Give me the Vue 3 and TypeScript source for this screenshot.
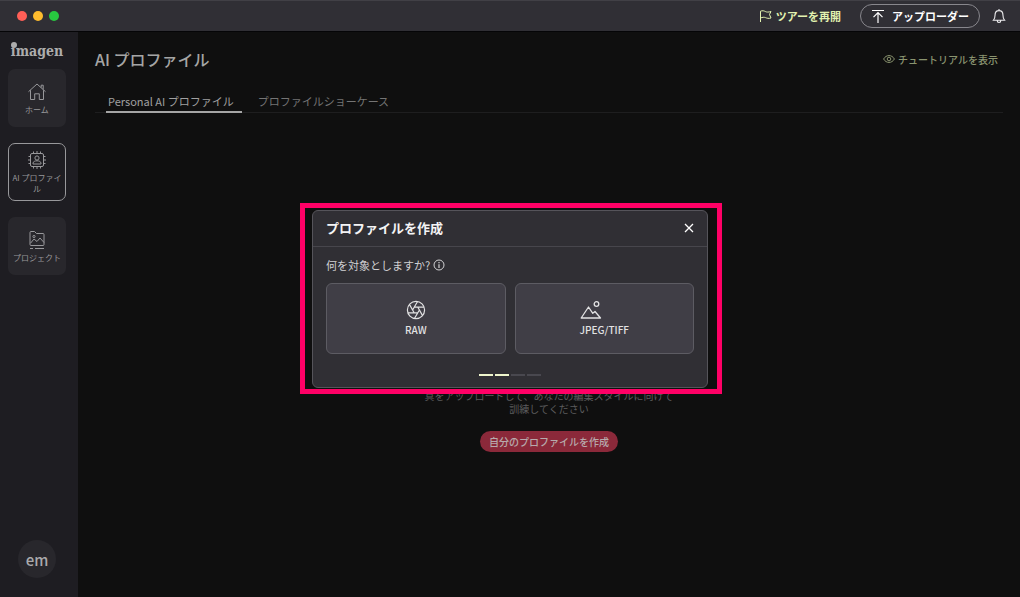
<script setup lang="ts">
import { ref } from 'vue'

interface NavItem {
  id: string
  label: string
}

const navItems: NavItem[] = [
  { id: 'home', label: 'ホーム' },
  { id: 'profile', label: 'AI プロファイル' },
  { id: 'project', label: 'プロジェクト' },
]
const activeNav = ref('profile')

const tabs: string[] = ['Personal AI プロファイル', 'プロファイルショーケース']
const activeTab = ref(0)

const steps = 4
const currentStep = ref(2)
</script>

<template>
  <div class="app">
    <header class="topbar">
      <div class="lights">
        <span class="light red"></span>
        <span class="light yellow"></span>
        <span class="light green"></span>
      </div>
      <button class="tour" type="button">
        <svg width="13" height="12" viewBox="0 0 13 12" fill="none" stroke="currentColor">
          <path d="M1.5 12V1.2C3.5.4 5 .8 6.300 1.500S9.500 2.300 12 1.500L10.500 4.500 12 8C9.500 8.800 8 8.200 6.500 7.600S3.500 7.200 1.500 8" />
        </svg>
        ツアーを再開
      </button>
      <button class="uploader" type="button">
        <svg width="14" height="14" viewBox="0 0 14 14" fill="none" stroke="currentColor" stroke-width="1.200">
          <path d="M1 1.500H13M7 14V4M2.500 8.200 7 3.700l4.500 4.500" />
        </svg>
        アップローダー
      </button>
      <button class="bell" type="button" aria-label="通知">
        <svg width="14" height="16" viewBox="0 0 14 16" fill="none" stroke="currentColor" stroke-width="1.100">
          <path d="M7 1v1.500M1.500 12.200C2.800 10.800 3 9.500 3 7.500 3 4.500 4.500 2.600 7 2.600s4 1.900 4 4.900c0 2 .2 3.300 1.500 4.700ZM5.200 12.500c0 2.600 3.600 2.600 3.600 0" />
        </svg>
      </button>
    </header>

    <div class="body">
      <nav class="sidebar">
        <div class="logo">imagen</div>
        <button
          v-for="item in navItems"
          :key="item.id"
          class="nav-item"
          :class="{ active: item.id === activeNav }"
          type="button"
          @click="activeNav = item.id"
        >
          <svg v-if="item.id === 'home'" width="20" height="20" viewBox="0 0 20 20" fill="none" stroke="currentColor">
            <path d="M1.500 9.700 10 2l8.500 7.700M3.500 8.200v9.300h4.200v-5.700h4.600v5.700h4.200V8.200M14.200 5.500V3.200h2v4.300" />
          </svg>
          <svg v-else-if="item.id === 'profile'" width="20" height="20" viewBox="0 0 20 20" fill="none" stroke="currentColor">
            <rect x="3.500" y="3.500" width="13" height="13" rx="1.500" />
            <circle cx="10" cy="8" r="2.100" />
            <path d="M6 14v-.8c0-3.200 8-3.200 8 0v.8ZM6.500 1.500v2M10 1v2.500M13.500 1.500v2M6.500 16.500v2M10 16.500V19M13.500 16.500v2M1.500 6.500h2M1 10h2.500M1.500 13.500h2M16.500 6.500h2M16.500 10H19M16.500 13.500h2" />
          </svg>
          <svg v-else width="20" height="20" viewBox="0 0 20 20" fill="none" stroke="currentColor">
            <path d="M3 14.500V2.500q0-1 1-1h3.500l2 2H16q1 0 1 1v10q0 1-1 1H4q-1 0-1-1ZM3.500 13.200 7 9l3 2.500L13 8l4 4.500M3 18.500h3M8 18.500h9" />
            <circle cx="7" cy="6.500" r="1.100" />
          </svg>
          <span>{{ item.label }}</span>
        </button>
        <button class="avatar" type="button">em</button>
      </nav>

      <main class="main">
        <div class="title-row">
          <h1>AI プロファイル</h1>
          <a class="tutorial" href="#">
            <svg width="12" height="10" viewBox="0 0 12 10" fill="none" stroke="currentColor">
              <path d="M.6 5C3.200.4 8.800.4 11.400 5 8.800 9.600 3.200 9.600.6 5Z" />
              <circle cx="6" cy="5" r="1.800" />
            </svg>
            チュートリアルを表示
          </a>
        </div>
        <div class="tabs" role="tablist">
          <button
            v-for="(tab, i) in tabs"
            :key="tab"
            class="tab"
            :class="{ active: i === activeTab }"
            type="button"
            role="tab"
            :aria-selected="i === activeTab"
            @click="activeTab = i"
          >
            {{ tab }}
          </button>
        </div>
        <section class="empty">
          <p>真をアップロードして、あなたの編集スタイルに向けて<br />訓練してください</p>
          <button class="create" type="button">自分のプロファイルを作成</button>
        </section>
      </main>
    </div>

    <div class="overlay">
      <div class="highlight">
        <section class="modal" role="dialog" aria-labelledby="modal-title">
          <div class="modal-head">
            <h2 id="modal-title">プロファイルを作成</h2>
            <button class="close" type="button" aria-label="閉じる">
              <svg width="10" height="10" viewBox="0 0 10 10" stroke="currentColor" stroke-width="1.300">
                <path d="M1 1l8 8M9 1 1 9" />
              </svg>
            </button>
          </div>
          <div class="modal-body">
            <div class="question">
              何を対象としますか?
              <svg width="12" height="12" viewBox="0 0 12 12" fill="none" stroke="currentColor">
                <circle cx="6" cy="6" r="5" />
                <path d="M6 5.200V9M6 3v1.200" stroke-width="1.200" />
              </svg>
            </div>
            <div class="choices">
              <button class="choice" type="button">
                <svg width="20" height="20" viewBox="0 0 20 20" fill="none" stroke="currentColor" stroke-width="1.200">
                  <circle cx="10" cy="10" r="8.600" />
                  <path d="M8.300 7.050H18.100M11.700 7.050 16.600 15.600M13.400 10 8.450 18.500M11.700 12.950H1.900M8.300 12.950 3.400 4.400M6.600 10 11.550 1.500" />
                </svg>
                RAW
              </button>
              <button class="choice" type="button">
                <svg class="photo-icon" width="22" height="20" viewBox="0 0 22 20" fill="none" stroke="currentColor" stroke-width="1.300" stroke-linejoin="round">
                  <path d="M1.200 18 8.500 7l4.300 6.300 2.200-1.800L20.500 18Z" />
                  <circle cx="16.500" cy="4" r="2.300" />
                </svg>
                JPEG/TIFF
              </button>
            </div>
            <div class="steps">
              <span v-for="n in steps" :key="n" class="step" :class="{ done: n <= currentStep }"></span>
            </div>
          </div>
        </section>
      </div>
    </div>
  </div>
</template>

<style>
body {
  margin: 0;
  background: #0f0f0f;
}
</style>

<style scoped>
.app,
.app * {
  box-sizing: border-box;
}
.app {
  min-height: 100vh;
  display: flex;
  flex-direction: column;
  background: #0f0f0f;
  color: #a5a5a5;
  font-family: "Noto Sans CJK JP", "Noto Sans", sans-serif;
}
button {
  margin: 0;
  padding: 0;
  border: 0;
  background: none;
  color: inherit;
  font: inherit;
}
svg {
  display: block;
  flex: none;
}
h1,
h2,
p {
  margin: 0;
}
.topbar {
  display: flex;
  align-items: center;
  height: 32px;
  padding: 0 14px 1px 17px;
  background: #302f35;
  border-top: 1px solid #414046;
  border-bottom: 1px solid #050507;
}
.lights {
  display: flex;
  gap: 6px;
  margin-right: auto;
}
.light {
  width: 10px;
  height: 10px;
  border-radius: 50%;
}
.red {
  background: #ff5f57;
}
.yellow {
  background: #febc2e;
}
.green {
  background: #28c840;
}
.tour {
  display: flex;
  align-items: center;
  gap: 4px;
  color: #e2f3b0;
  font-size: 11px;
  font-weight: 700;
}
.uploader {
  display: flex;
  align-items: center;
  justify-content: center;
  gap: 7px;
  width: 120px;
  height: 24px;
  margin: 0 12px 0 19px;
  border: 1px solid #88878d;
  border-radius: 12px;
  color: #fff;
  font-size: 11px;
  font-weight: 700;
}
.bell {
  color: #ececee;
}
.body {
  flex: 1;
  display: flex;
}
.sidebar {
  display: flex;
  flex-direction: column;
  align-items: center;
  gap: 16px;
  width: 78px;
  padding: 10px 12px 19px 8px;
  background: #1e1d22;
}
.logo {
  position: relative;
  height: 19px;
  margin-bottom: -8px;
  color: #adadad;
  font-family: "DejaVu Serif Condensed", "DejaVu Serif", serif;
  font-size: 14px;
  font-weight: 700;
  line-height: 18px;
}
.logo::before {
  content: "";
  position: absolute;
  top: 0;
  left: 0;
  width: 6px;
  height: 6px;
  border-radius: 50%;
  background: #adadad;
}
.nav-item {
  display: flex;
  flex-direction: column;
  align-items: center;
  justify-content: center;
  gap: 2px;
  width: 58px;
  height: 58px;
  border: 1px solid transparent;
  border-radius: 7px;
  background: #28272c;
  color: #98989b;
  font-size: 8px;
  line-height: 11px;
}
.nav-item.active {
  border-color: #98989b;
  background: #1e1d22;
}
.avatar {
  width: 38px;
  height: 38px;
  margin-top: auto;
  border-radius: 50%;
  background: #28272c;
  color: #aaaaac;
  font-size: 15px;
  font-weight: 500;
}
.main {
  flex: 1;
  padding: 15px 17px 0;
}
.title-row {
  display: flex;
  align-items: center;
  justify-content: space-between;
  height: 24px;
  padding-right: 5px;
}
h1 {
  color: #a5a5a5;
  font-size: 16px;
  font-weight: 500;
}
.tutorial {
  display: flex;
  align-items: center;
  gap: 3px;
  color: #8a946f;
  font-size: 10px;
  font-weight: 500;
  text-decoration: none;
}
.tabs {
  display: flex;
  gap: 14px;
  height: 42px;
  padding: 0 11px;
  border-bottom: 1px solid #1e1e1f;
}
.tab {
  height: 42px;
  padding: 19px 4px 0 2px;
  border-bottom: 2px solid transparent;
  color: #747474;
  font-size: 11px;
  line-height: 20px;
}
.tab.active {
  padding-right: 8px;
  border-color: #a5a5a5;
  color: #a0a0a0;
}
.empty {
  display: flex;
  flex-direction: column;
  align-items: center;
  gap: 16px;
  padding-top: 276px;
  text-align: center;
}
.empty p {
  color: #5c5c5d;
  font-size: 10px;
  line-height: 13px;
}
.create {
  height: 21px;
  padding: 0 9px;
  border-radius: 11px;
  background: #8b293a;
  color: #b7aaac;
  font-size: 10px;
  font-weight: 500;
}
.overlay {
  position: fixed;
  inset: 0;
  display: flex;
  align-items: center;
  justify-content: center;
  padding-left: 2px;
}
.highlight {
  width: 422px;
  max-width: 100%;
  padding: 2px 9px 1px 7px;
  border: 5px solid #ff0066;
  background: #0f0f0f;
}
.modal {
  border: 1px solid #55545a;
  border-radius: 6px;
  background: #302f34;
  color: #e2e2e3;
}
.modal-head {
  display: flex;
  align-items: center;
  justify-content: space-between;
  height: 36px;
  padding: 0 13px 2px;
  border-bottom: 1px solid #47464c;
}
h2 {
  color: #f4f4f5;
  font-size: 13px;
  font-weight: 700;
}
.close {
  color: #fff;
}
.modal-body {
  padding: 10px 13px 11px;
}
.question {
  display: flex;
  align-items: center;
  gap: 3px;
  color: #d2d2d4;
  font-size: 11px;
  line-height: 16px;
}
.choices {
  display: grid;
  grid-template-columns: 1fr 1fr;
  gap: 9px;
  margin-top: 10px;
}
.choice {
  display: flex;
  flex-direction: column;
  align-items: center;
  justify-content: center;
  gap: 3px;
  height: 71px;
  border: 1px solid #5d5c63;
  border-radius: 6px;
  background: #403e46;
  color: #e2e2e3;
  font-size: 10px;
  font-weight: 500;
  line-height: 14px;
}
.photo-icon {
  margin-right: 26px;
}
.steps {
  display: flex;
  justify-content: center;
  gap: 2px;
  margin-top: 20px;
}
.step {
  width: 14px;
  height: 2px;
  background: #49484f;
}
.step.done {
  background: #eef5cc;
}
</style>
